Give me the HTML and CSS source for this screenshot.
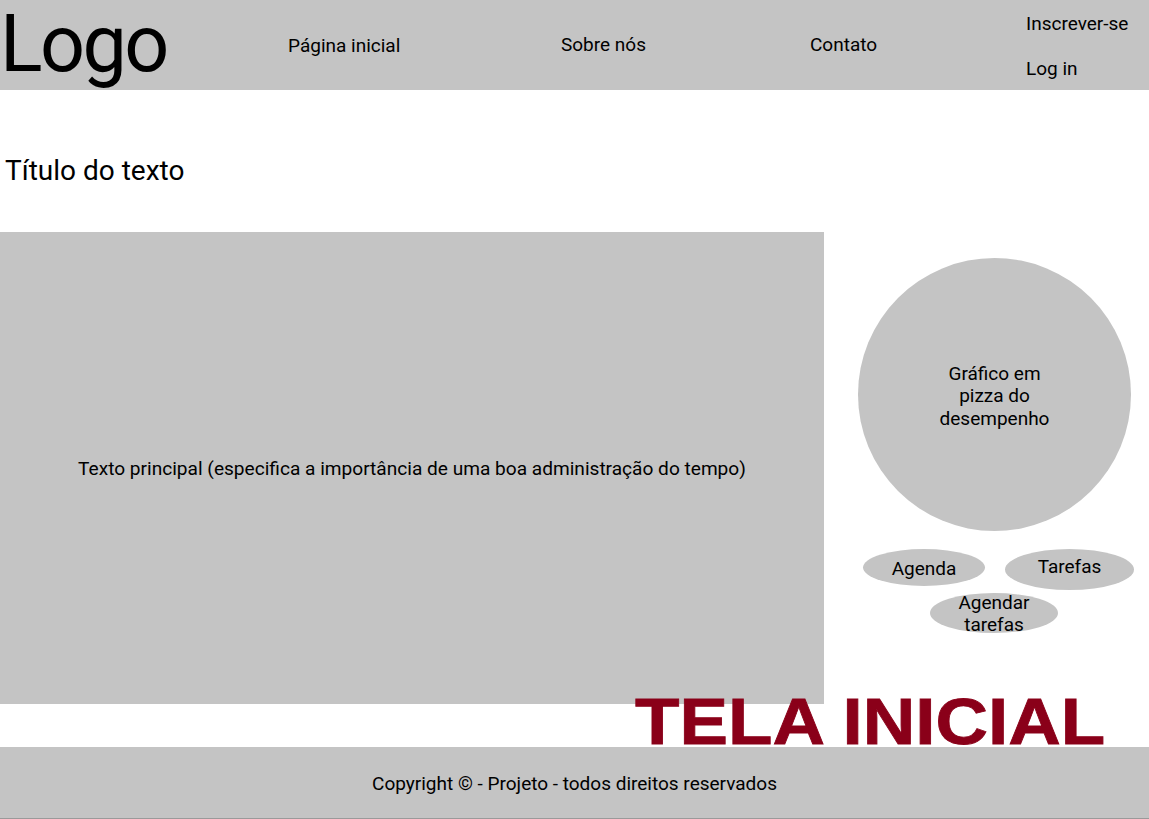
FILE: index.html
```html
<!DOCTYPE html>
<html lang="pt-BR">
<head>
<meta charset="utf-8">
<title>Tela inicial</title>
<link rel="stylesheet" href="styles.css">
</head>
<body>
<header class="topbar">
  <div class="logo">Logo</div>
  <a class="nav-link">Página inicial</a>
  <a class="nav-link">Sobre nós</a>
  <a class="nav-link nav-contato">Contato</a>
  <div class="account">
    <a class="nav-link">Inscrever-se</a>
    <a class="nav-link">Log in</a>
  </div>
</header>

<h1 class="title">Título do texto</h1>

<main class="content">
  <section class="main-text">Texto principal (especifica a importância de uma boa administração do tempo)</section>
  <aside class="side">
    <div class="pie">Gráfico em<br>pizza do<br>desempenho</div>
    <div class="pills">
      <div class="pill pill-agenda">Agenda</div>
      <div class="pill pill-tarefas">Tarefas</div>
      <div class="pill pill-agendar">Agendar<br>tarefas</div>
    </div>
  </aside>
</main>

<footer class="footer">
  <div class="stamp">TELA INICIAL</div>
  <p class="copy">Copyright © - Projeto - todos direitos reservados</p>
</footer>
</body>
</html>
```

FILE: styles.css
```css
* { box-sizing: border-box; }

html, body {
  margin: 0;
  padding: 0;
}

body {
  width: 1149px;
  height: 819px;
  overflow: hidden;
  font-family: Roboto, "Liberation Sans", sans-serif;
  color: #000;
  background: #fff;
}

.topbar {
  height: 90px;
  background: #c4c4c4;
  display: grid;
  grid-template-columns: 288px 273px 249px 216px 1fr;
  align-items: center;
}

.logo {
  align-self: start;
  padding-top: 4px;
  font-size: 79px;
  line-height: 80px;
  letter-spacing: -2.6px;
}

.nav-link {
  font-size: 19px;
  line-height: 22px;
  color: #000;
  display: block;
}

.nav-link:first-of-type { margin-top: 2px; }

.nav-contato { margin-top: 0; }

.account {
  display: flex;
  flex-direction: column;
  gap: 23px;
  margin-top: 2px;
}

.account .nav-link { margin-top: 0; }

.title {
  margin: 0;
  padding: 66px 0 0 5px;
  height: 142px;
  font-size: 28px;
  font-weight: 400;
  line-height: 30px;
}

.content {
  display: flex;
  height: 473px;
}

.main-text {
  width: 824px;
  height: 472px;
  background: #c4c4c4;
  display: flex;
  align-items: center;
  justify-content: center;
  font-size: 19.1px;
  line-height: 22px;
  padding-top: 2px;
}

.side {
  flex: 1;
  padding: 26px 0 0 34px;
}

.pie {
  width: 273px;
  height: 273px;
  border-radius: 50%;
  background: #c4c4c4;
  display: flex;
  align-items: center;
  justify-content: center;
  text-align: center;
  font-size: 19px;
  line-height: 22.5px;
  padding-top: 4px;
}

.pills {
  position: relative;
  height: 120px;
  margin-left: -34px;
}

.pill {
  position: absolute;
  background: #c4c4c4;
  border-radius: 50%;
  display: flex;
  align-items: center;
  justify-content: center;
  text-align: center;
  font-size: 19px;
  line-height: 22px;
}

.pill-agenda { left: 39px; top: 18px; width: 122px; height: 37px; padding-top: 3px; }
.pill-tarefas { left: 181px; top: 18px; width: 129px; height: 41px; padding-bottom: 5px; }
.pill-agendar { left: 106px; top: 62px; width: 128px; height: 40px; padding-top: 2px; }

.footer {
  position: relative;
  margin-top: 42px;
  height: 72px;
  background: #c4c4c4;
  border-bottom: 1px solid #9a9a9a;
  display: flex;
  align-items: center;
  justify-content: center;
}

.copy {
  margin: 0;
  font-size: 19px;
  line-height: 22px;
  padding-top: 3px;
}

.stamp {
  position: absolute;
  left: 635px;
  bottom: 66px;
  font-family: "Liberation Sans", Arial, sans-serif;
  font-weight: 700;
  font-size: 64px;
  line-height: 60px;
  letter-spacing: 0;
  color: #8a0019;
  white-space: nowrap;
  transform: scaleX(1.137);
  transform-origin: left bottom;
  -webkit-text-stroke: 0.8px #8a0019;
}
```
